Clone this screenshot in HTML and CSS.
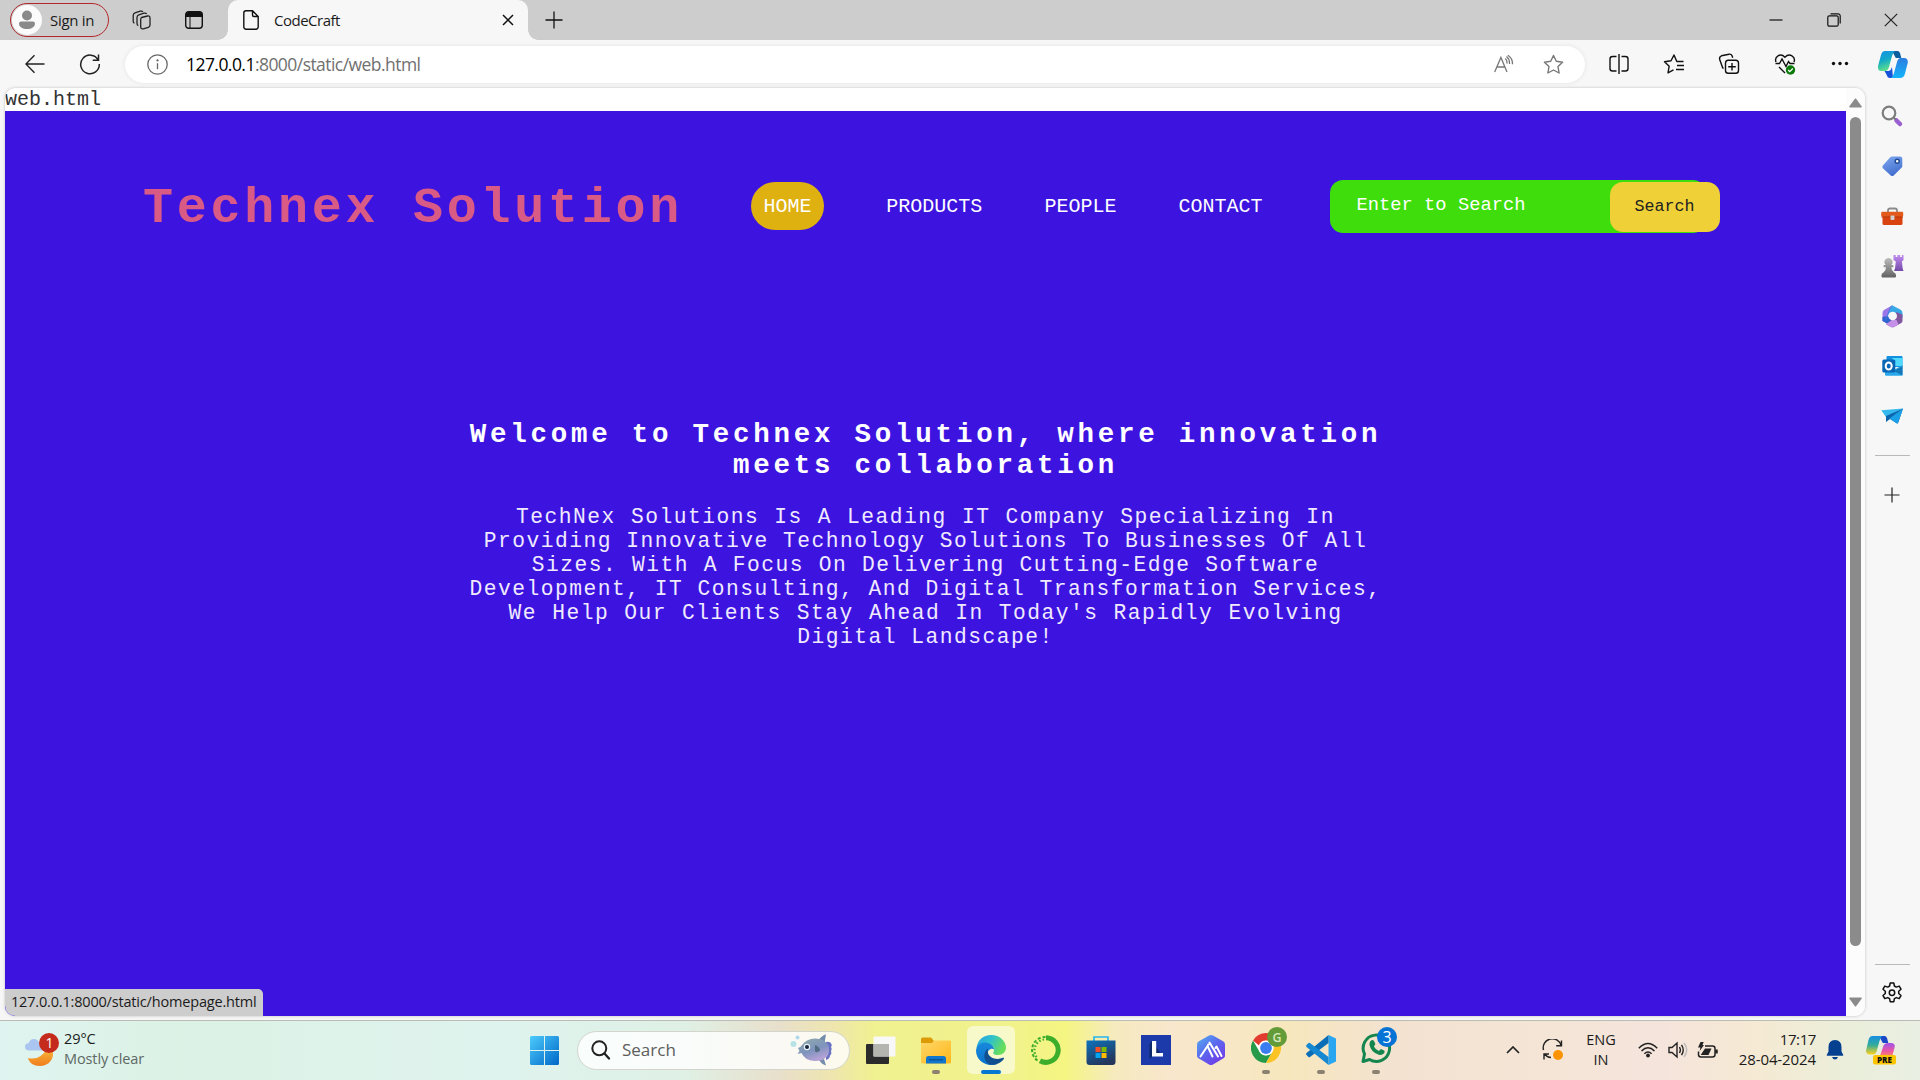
FILE: index.html
```html
<!DOCTYPE html>
<html lang="en">
<head>
<meta charset="utf-8">
<title>CodeCraft</title>
<link rel="stylesheet" href="styles.css">
</head>
<body>
<div class="screen">
  <header class="titlebar">
    <div class="profile">
      <svg class="avatar" width="30" height="30" viewBox="0 0 30 30"><circle cx="15" cy="15" r="15" fill="#fbfbfb"/><circle cx="15" cy="10.500" r="5" fill="#8a8a8a"/><path d="M9 16.500h12a2 2 0 0 1 2 2c0 3.600-3.500 5.500-8 5.500s-8-1.900-8-5.500a2 2 0 0 1 2-2z" fill="#8a8a8a"/></svg>
      <span class="ui signin">Sign in</span>
    </div>
    <svg class="ic workspaces" width="22" height="22" viewBox="0 0 22 22" fill="none" stroke="#222" stroke-width="1.300" stroke-linejoin="round"><path d="M11.500 8.500 17.500 7q2.500-.5 2.500 2v7q0 1.800-1.700 2.300l-5 1.500q-2.600.6-2.600-2v-7q0-1.800.8-2.300zM8.300 16.500q-1.300-.3-1.300-2V8.500q0-2 1.800-2.600L14 4.200q1.800-.5 2.700.8M4.500 14.200q-1.300-.3-1.300-2V6.500q0-2 1.800-2.600l5.200-1.700q1.800-.5 2.700.6"/></svg>
    <svg class="ic tabact" width="18" height="18" viewBox="0 0 18 18"><rect x=".7" y=".7" width="16.600" height="16.600" rx="3" fill="none" stroke="#111" stroke-width="1.400"/><path d="M1 6V3.500A2.500 2.500 0 0 1 3.500 1h11A2.500 2.500 0 0 1 17 3.500V6z" fill="#111"/><path d="M5 6v11" stroke="#111"/></svg>
    <div class="tab">
      <svg width="16" height="20" viewBox="0 0 16 20" fill="none" stroke="#111" stroke-width="1.400"><path d="M3 .8h6.500L15.200 6.500V17a2.200 2.200 0 0 1-2.200 2.200H3A2.200 2.200 0 0 1 .8 17V3A2.200 2.200 0 0 1 3 .8zM9.500.8V5A1.500 1.500 0 0 0 11 6.500h4.200"/></svg>
      <span class="ui tabname">CodeCraft</span>
      <svg class="tabclose" width="12" height="12" viewBox="0 0 12 12" stroke="#111" stroke-width="1.500"><path d="M1 1l10 10M11 1 1 11"/></svg>
    </div>
    <svg class="ic newtab" width="18" height="18" viewBox="0 0 18 18" stroke="#111" stroke-width="1.300"><path d="M9 .5v17M.5 9h17"/></svg>
    <div class="winbtns">
      <svg width="14" height="14" viewBox="0 0 14 14" stroke="#111" stroke-width="1.200"><path d="M.5 7h13"/></svg>
      <svg width="14" height="14" viewBox="0 0 14 14" fill="none" stroke="#111" stroke-width="1.200"><rect x=".8" y="2.800" width="10.400" height="10.400" rx="1.500"/><path d="M3.500.8H11A2.200 2.200 0 0 1 13.200 3v7.500"/></svg>
      <svg width="14" height="14" viewBox="0 0 14 14" stroke="#222" stroke-width="1.200"><path d="M.8.8l12.400 12.400M13.200.8.8 13.200"/></svg>
    </div>
  </header>

  <nav class="toolbar">
    <svg class="back" width="20" height="20" viewBox="0 0 20 20" fill="none" stroke="#222" stroke-width="1.400"><path d="M19.500 10H1M9.500 1.200.9 10l8.600 8.800"/></svg>
    <svg class="reload" width="22" height="22" viewBox="0 0 22 22" fill="none" stroke="#222" stroke-width="1.500"><path d="M19.200 7A9.300 9.300 0 1 0 20.300 11M19.500 1.500v5.700h-5.800"/></svg>
    <div class="address">
      <svg width="21" height="21" viewBox="0 0 21 21" fill="none" stroke="#666" stroke-width="1.300"><circle cx="10.500" cy="10.500" r="9.700"/><path d="M10.500 9.200v6"/><circle cx="10.500" cy="6.400" r=".5" fill="#666"/></svg>
      <span class="ui url"><b>127.0.0.1</b>:8000/static/web.html</span>
      <svg class="readaloud" width="20" height="18" viewBox="0 0 20 18" fill="none" stroke="#777" stroke-width="1.300"><path d="M.7 17 6.900 2.500 13 17M3 12h8M11.300 3.600q2 1.700 1.700 4.900M12.500 1.600q3.300 2.600 3 7.400M13.800.3q5 3.200 4.700 9"/></svg>
      <svg class="star" width="21" height="21" viewBox="0 0 21 21" fill="none" stroke="#777" stroke-width="1.400" stroke-linejoin="round"><path d="M10.500 1.500l2.800 5.800 6.300.9-4.600 4.400 1.100 6.400-5.600-3-5.600 3L6 12.600 1.400 8.200l6.300-.9z"/></svg>
    </div>
    <div class="tools">
      <svg width="22" height="22" viewBox="0 0 22 22" fill="none" stroke="#111" stroke-width="1.400"><path d="M8.500 3.500h-4a2.500 2.500 0 0 0-2.500 2.500v9.500A2.500 2.500 0 0 0 4.500 18h4M13.500 3.500h4A2.500 2.500 0 0 1 20 6v9.500a2.500 2.500 0 0 1-2.500 2.500h-4M11 1v20"/></svg>
      <svg width="22" height="22" viewBox="0 0 22 22" fill="none" stroke="#111" stroke-width="1.400" stroke-linejoin="round"><path d="M20.500 8.500h-6.700L11 2 8 7.800l-6.500.9 4.700 4.500L5 19.800l5.500-3M14 12.500h7M13 16.500h8"/></svg>
      <svg width="22" height="22" viewBox="0 0 22 22" fill="none" stroke="#111" stroke-width="1.400"><rect x="7.500" y="7.200" width="13" height="13" rx="2.800"/><path d="M14 10v7.500M10.200 13.700h7.600M5.500 15.500q-1-.5-1.300-2L1.700 6.500Q1 3.600 3.500 2.800L11 1.200q2.300-.3 3.200 1.800l.5 1.800"/></svg>
      <svg width="22" height="22" viewBox="0 0 22 22" fill="none" stroke="#111" stroke-width="1.400"><path d="M2 9C0 3.500 6.500-.5 10.900 4.200 15.500-.5 22 3.500 20 9M1.500 10.500H5.500l2.500-4.500 4 7.500 2.500-5 1.500 2h4.500M5 14l6 6"/><circle cx="16.500" cy="17" r="4.700" fill="#0b7a0b" stroke="none"/><path d="M14.200 17l1.600 1.700 3-3.200" stroke="#fff" stroke-width="1.200"/></svg>
      <svg width="22" height="22" viewBox="0 0 22 22" fill="#111"><circle cx="4.500" cy="10.500" r="1.700"/><circle cx="11" cy="10.500" r="1.700"/><circle cx="17.500" cy="10.500" r="1.700"/></svg>
    </div>
    <svg class="copilot" width="30" height="27" viewBox="0 0 30 27"><defs><linearGradient id="c1" x2=".3" y2="1"><stop stop-color="#1593e8"/><stop offset=".5" stop-color="#12a8c8"/><stop offset="1" stop-color="#5ce08c"/></linearGradient><linearGradient id="c2" x2="0" y2="1"><stop stop-color="#2b7de0"/><stop offset="1" stop-color="#14b4fa"/></linearGradient></defs><path d="M14 0h5.500q2.500.3 3 4l.8 3h-5.500z" fill="#0b5f9e"/><path d="M7 0h10q-2 1-3 5l-3 11q-1 4-4 4H3Q-1 19.500.3 14L3 4Q4 0 7 0z" fill="url(#c1)"/><path d="M6.500 20H11q2-.5 3-4l1 11h-3q-2.500 0-3.500-3.500z" fill="#1553d8"/><path d="M23 7h3q4.500.3 3.700 5L27 22.500Q26 27 22 27h-9q2-1 3-5l3-11q1-4 4-4z" fill="url(#c2)"/></svg>
  </nav>

  <main class="workspace">
    <section class="viewport">
      <div class="page">
        <p class="pagepath">web.html</p>
        <div class="site">
          <div class="sitenav">
            <h1>Technex Solution</h1>
            <ul class="menu"><li class="active">HOME</li><li>PRODUCTS</li><li>PEOPLE</li><li>CONTACT</li></ul>
            <div class="searchform"><div class="field">Enter to Search</div><button class="go">Search</button></div>
          </div>
          <article class="welcome">
            <h2>Welcome to Technex Solution, where innovation<br>meets collaboration</h2>
            <p><span class="loose">TechNex Solutions Is A Leading IT Company Specializing In</span><br>Providing Innovative Technology Solutions To Businesses Of All<br><span class="mid">Sizes. With A Focus On Delivering Cutting-Edge Software</span><br>Development, IT Consulting, And Digital Transformation Services,<br><span class="loose">We Help Our Clients Stay Ahead In Today's Rapidly Evolving</span><br>Digital Landscape!</p>
          </article>
        </div>
      </div>
      <div class="scrollbar">
        <svg width="13" height="10" viewBox="0 0 13 10"><path d="M6.500 1.200 12 8.800H1z" fill="#8b8b8b" stroke="#8b8b8b" stroke-width="1.500" stroke-linejoin="round"/></svg>
        <div class="thumb"></div>
        <svg class="down" width="13" height="10" viewBox="0 0 13 10"><path d="M6.500 8.800 12 1.200H1z" fill="#8b8b8b" stroke="#8b8b8b" stroke-width="1.500" stroke-linejoin="round"/></svg>
      </div>
      <div class="statusbubble"><span class="ui statustext">127.0.0.1:8000/static/homepage.html</span></div>
    </section>

    <aside class="sidebar">
      <svg width="24" height="24" viewBox="0 0 24 24" fill="none"><path d="M16.500 16.500l3.500 3.500" stroke="#9a5fd0" stroke-width="4.500" stroke-linecap="round"/><path d="M13 13l2.500 2.500" stroke="#777" stroke-width="2"/><circle cx="9" cy="9" r="6.300" stroke="#7d7d7d" stroke-width="2.200"/></svg>
      <svg width="24" height="24" viewBox="0 0 24 24"><defs><linearGradient id="tg" x2=".4" y2="1"><stop stop-color="#7fa9f0"/><stop offset="1" stop-color="#4470cf"/></linearGradient></defs><path d="M12 2.500h8a2.300 2.300 0 0 1 2.300 2.300V12q0 1-.8 1.800l-7.800 7.700q-1.500 1.200-3 0l-7.800-7.200q-1.200-1.300 0-2.800l7.300-8.200Q11 2.500 12 2.500z" fill="url(#tg)"/><circle cx="17.200" cy="7.300" r="2" fill="#fff" stroke="#204a94" stroke-width="1.500"/></svg>
      <svg class="toolbox" width="24" height="24" viewBox="0 0 24 24"><path d="M8 7V5.500q0-2 2-2h5q2 0 2 2V7" fill="none" stroke="#8a8a8a" stroke-width="1.800"/><rect x="2.500" y="11" width="20" height="9" rx="1.500" fill="#d8430f"/><rect x="1.200" y="6.800" width="22" height="5" rx="1.200" fill="#e25b1c"/><path d="M1.500 12h21.500" stroke="#b93808"/><rect x="10.500" y="10.500" width="4" height="4.500" rx="1" fill="#d0d0d0"/></svg>
      <svg width="24" height="24" viewBox="0 0 24 24"><defs><linearGradient id="pw" x2="0" y2="1"><stop stop-color="#bcbcbc"/><stop offset="1" stop-color="#626262"/></linearGradient><linearGradient id="rk" x2="0" y2="1"><stop stop-color="#c18cf0"/><stop offset="1" stop-color="#734aa8"/></linearGradient></defs><path d="M13.500 1h2.200v2h1.700V1h2.700v2h1.700V1h1.700v5l-1.600 1.600.8 7 .8 2.400h-9.500l1-2.400.8-7L13.500 6z" fill="url(#rk)"/><path d="M8.500 4a4 4 0 0 1 2.800 7h2v2.200h-2q.2 3.500 2.700 5.300 2 .8 2 2.500v1.500q0 1-1 1H2.500q-1 0-1-1V21q0-1.700 2-2.500 2.500-1.800 2.500-5.300H3.700V11h2A4 4 0 0 1 8.500 4z" fill="url(#pw)"/></svg>
      <svg width="24" height="24" viewBox="0 0 24 24"><path d="M12.500 1.200 4 5.900Q2.500 7 2.500 9v8l5 2.500 2-4-1.500-4z" fill="#9b76e8"/><path d="M2.500 13v4l5.300 3 4.500-3.800L8 12z" fill="#2f65cf"/><path d="M12 1.200l8.700 4.500q1.800 1.200 1.800 3.500v4.300L16 12l-4.500-3.500L9 9.500z" fill="#36a8e6"/><path d="M12 1.200 9 9.500 8 12 5 17l5-14z" fill="#4a82df"/><path d="M22.500 10.500V17q0 1.200-1.200 2l-7.300 4q-1.500.6-3 0l-5-2.800 6-4.700L16.500 12l-.5-4z" fill="#80569f"/><path d="M6 20.300 12 16h4.500l2 4.500-4.500 2.500q-1.500.6-3 0z" fill="#c491e8"/><circle cx="12.700" cy="12" r="4.300" fill="#f7f7f7"/></svg>
      <svg width="24" height="24" viewBox="0 0 24 24"><rect x="6.500" y="2" width="16" height="11" rx="1" fill="#1490df"/><path d="M12.500 4h10v8h-10z" fill="#50d9ff"/><path d="M5 11l9 5 8.500-5v9.500a1.200 1.200 0 0 1-1.200 1.200H6.200A1.200 1.200 0 0 1 5 20.500z" fill="#28a8ea"/><path d="M22.500 12 14 17l8.500 4.500z" fill="#1377b8"/><rect x="2.300" y="5.500" width="13" height="13" rx="1.500" fill="#0766b5"/><ellipse cx="8.700" cy="12" rx="3" ry="3.500" fill="none" stroke="#fff" stroke-width="2"/></svg>
      <svg width="24" height="24" viewBox="0 0 24 24"><path d="M1.300 6.300 23 4.500 6 13z" fill="#35b8ee"/><path d="M23 4.500 6 12v6l4-3 7 4.500q1 0 1.500-1.500z" fill="#0c66ad"/><path d="M23 4.500 9.500 14.500 17 19.500q.8.200 1.300-1.500z" fill="#19a0e6"/></svg>
      <hr>
      <svg class="add" width="18" height="18" viewBox="0 0 18 18" stroke="#222" stroke-width="1.200"><path d="M9 1.500v15M1.500 9h15"/></svg>
      <hr class="low">
      <svg class="gear" width="22" height="22" viewBox="0 0 22 22" fill="none" stroke="#111" stroke-width="1.500" stroke-linejoin="round"><path d="M9.200 1h3.600l.6 3 1.900 1.100 2.900-1 1.800 3.100-2.300 2v2.300l2.300 2-1.800 3.100-2.900-1-1.900 1.100-.6 3H9.200l-.6-3-1.900-1.100-2.900 1L2 13.500l2.300-2V9.200L2 7.200l1.800-3.100 2.900 1L8.600 4z"/><circle cx="11" cy="10.800" r="2.700"/></svg>
    </aside>
  </main>

  <footer class="taskbar">
    <div class="weather">
      <svg width="34" height="34" viewBox="0 0 34 34"><defs><linearGradient id="mn" x2="0" y2="1"><stop stop-color="#f8bc3c"/><stop offset="1" stop-color="#f07c1d"/></linearGradient></defs><path d="M3 25q12 3 19.500-10 6 1.500 5.500 7c-1 7-6.500 11-13 11-6 0-11-3-12-8z" fill="url(#mn)"/><path d="M3.500 17.500q-3.500-.5-3.500-3.700t3.500-3.500Q5 6 9 6q3.500 0 5 3.500l3 8z" fill="#a9c5f0"/><circle cx="24" cy="10" r="10" fill="#c42b1c"/><text x="24.500" y="15" font-size="14" fill="#fff" text-anchor="middle" class="svgtext">1</text></svg>
      <div class="wtext"><span class="ui temp">29°C</span><span class="ui cond">Mostly clear</span></div>
    </div>
    <svg class="start" width="29" height="29" viewBox="0 0 29 29"><defs><linearGradient id="wn" x2="1" y2="1"><stop stop-color="#4ccbfc"/><stop offset="1" stop-color="#0067c7"/></linearGradient></defs><path d="M1.500 0H14v14H0V1.500Q0 0 1.500 0zM15 0h12.500Q29 0 29 1.500V14H15zM0 15h14v14H1.500Q0 29 0 27.500zM15 15h14v12.500q0 1.500-1.500 1.500H15z" fill="url(#wn)"/></svg>
    <div class="tasksearch">
      <svg width="20" height="20" viewBox="0 0 20 20" fill="none" stroke="#222"><circle cx="8.300" cy="8.300" r="7" stroke-width="2"/><path d="M13.500 13.500l4.500 5" stroke-width="2.300" stroke-linecap="round"/></svg>
      <span class="ui tsearch">Search</span>
      <svg class="fish" width="44" height="32" viewBox="0 0 44 32"><defs><linearGradient id="fs" x2=".5" y2="1"><stop stop-color="#92ada8"/><stop offset=".6" stop-color="#7e93bd"/><stop offset="1" stop-color="#b5a2d6"/></linearGradient></defs><circle cx="3.500" cy="10" r="3" fill="#b8e3e6"/><circle cx="7.500" cy="3.500" r="2" fill="#b2d8ec"/><path d="M28 7q4-6 8-6.500L34.500 9zM29 26l5-1 2 6.500q-4-1-7-5.500z" fill="#738daa"/><path d="M36 8q4-1 5.500 2 .8 2-.5 3 1.500 2 0 4 1 3-1 4.500 0 3-4 4.500z" fill="#6972c3"/><path d="M8 14q2 0 4-3Q17 4 26 4.500q9 .5 12.500 7 1.500 7-1.500 11-5 5-13 4.500-9-.5-12.500-8l-4 1 2-3z" fill="url(#fs)"/><circle cx="17" cy="13" r="3.200" fill="#e7f5f8"/><circle cx="17" cy="13" r="2" fill="#16233f"/><path d="M25 11q5 2 5 5.500-3 3-5 1z" fill="#526d82"/></svg>
    </div>
    <div class="apps">
      <div class="app"><svg width="30" height="30" viewBox="0 0 30 30"><rect y="9" width="23" height="20" rx="1" fill="#2b2b2b"/><rect x="7.500" y="1.500" width="22" height="20" rx="1" fill="#f8f8f8"/><path d="M7.500 9H23v12.500H7.500z" fill="#b5b5b0"/></svg></div>
      <div class="app run"><svg width="30" height="30" viewBox="0 0 30 30"><defs><linearGradient id="fo" x2="1" y2="1"><stop stop-color="#ffd768"/><stop offset="1" stop-color="#ffb71b"/></linearGradient></defs><path d="M0 4q0-1.500 1.500-1.500H10L13 6v5H0z" fill="#dc9a06"/><path d="M0 8h11l2-2.500h16q1 0 1 1V27q0 1.500-1.500 1.500h-27Q0 28.500 0 27z" fill="url(#fo)"/><path d="M5 28.500v-5Q5 21 7.500 21h15q2.500 0 2.500 2.500v5z" fill="#1177cc"/><path d="M8 24.800h14" stroke="#0a4f93" stroke-width="1.300"/></svg></div>
      <div class="app run active"><svg width="30" height="30" viewBox="0 0 30 30"><defs><linearGradient id="e1" x2="1" y2=".4"><stop stop-color="#279fe4"/><stop offset=".5" stop-color="#2fc0cc"/><stop offset="1" stop-color="#67df5a"/></linearGradient><linearGradient id="e2" x2=".2" y2="1"><stop stop-color="#1b8adc"/><stop offset="1" stop-color="#0874cc"/></linearGradient></defs><path d="M.5 13C1.500 5 7.500 0 15 0c9 0 15 6.500 15 12.500 0 4.500-3.500 7.500-8 7.500-4 0-5.500-1.500-4.500-3 1.500-2.500.5-6-4-7.500Q6 7.500.5 13z" fill="url(#e1)"/><path d="M0 15.500C.5 9.500 6 7 10 7.500c5 .7 8 4 8 7-3-2-6.500 1-6.500 4.500 0 5 4 10 9.500 10C10 32.500 0 25.500 0 15.500z" fill="url(#e2)"/><path d="M12 13.500c-5 4-5.500 12 1.500 16 7 1.500 12.500-2.500 14.500-6 .3-.8-.3-1-1-.7-7 3-14-.5-15-4.800-.3-1.800-.2-3 0-4.500z" fill="#124f91"/></svg></div>
      <div class="app"><svg width="30" height="30" viewBox="0 0 30 30" fill="none" stroke="#3cae2b"><path d="M15 2.700A12.300 12.300 0 1 1 9 25.800" stroke-width="5"/><path d="M14.500 2A13 13 0 0 0 8 26.500" stroke-width="2" stroke-dasharray="3 2"/><path d="M13 4.500A11 11 0 0 0 7 23.500" stroke-width="2.200" stroke-dasharray="1.500 2"/></svg></div>
      <div class="app"><svg width="30" height="30" viewBox="0 0 30 30"><defs><linearGradient id="st" x2=".5" y2="1"><stop stop-color="#0d72bd"/><stop offset="1" stop-color="#24365c"/></linearGradient></defs><path d="M8 6V2h14v4" fill="none" stroke="#29b5ee" stroke-width="1.700"/><path d="M.5 5.500h29V27q0 3-3 3h-23q-3 0-3-3z" fill="url(#st)"/><path d="M9.500 12h5v5h-5z" fill="#f25022"/><path d="M15.500 12h5v5h-5z" fill="#7fba00"/><path d="M9.500 18h5v5h-5z" fill="#00a4ef"/><path d="M15.500 18h5v5h-5z" fill="#ffb900"/></svg></div>
      <div class="app"><svg width="30" height="30" viewBox="0 0 30 30"><path d="M0 0h30v30H0z" fill="#1c3aa9"/><path d="M11 6l-2.500 3v15l3-3h10z" fill="#0c2a6a"/><path d="M11 6h4.200v12H22v3.500H11z" fill="#fff"/></svg></div>
      <div class="app"><svg width="30" height="30" viewBox="0 0 30 30"><defs><linearGradient id="hx" x2=".8" y2="1"><stop stop-color="#55b2f4"/><stop offset=".5" stop-color="#5a67ec"/><stop offset="1" stop-color="#7238e8"/></linearGradient></defs><path d="M15 0q1 0 2 .6l10.500 6Q29 7.500 29 9.500v11q0 2-1.500 2.800L17 29.400q-2 1.200-4 0L2.500 23.300Q1 22.500 1 20.500v-11q0-2 1.500-2.900l10.500-6Q14 0 15 0z" fill="url(#hx)"/><path d="M4.500 21.500 11.500 11l5 10.500M11.500 11l.8-1.500M13.500 7.500 22 21.500M19.500 13l1-1.500 5 9.500" fill="none" stroke="#fff" stroke-width="2" stroke-linecap="round" stroke-linejoin="round"/></svg></div>
      <div class="app run"><svg width="38" height="38" viewBox="0 0 38 38" class="badged"><circle cx="15" cy="21" r="15" fill="#fff"/><path d="M2 13.500a15 15 0 0 1 26 0H15a7.500 7.500 0 0 0-7 5z" fill="#e33b2e"/><path d="M2 13.500A15 15 0 0 0 15 36l6.500-11.250a7.500 7.500 0 0 1-13 0z" fill="#259b49"/><path d="M28 13.500A15 15 0 0 1 15 36l6.500-11.250A7.500 7.500 0 0 0 15 13.500z" fill="#fbc424"/><circle cx="15" cy="21" r="7.300" fill="#fff"/><circle cx="15" cy="21" r="5.900" fill="#397df0"/><circle cx="26" cy="10" r="10" fill="#639b38"/><text x="26" y="14.500" font-size="12.500" fill="#d7e8bd" text-anchor="middle" class="svgtext bold">G</text></svg></div>
      <div class="app run"><svg width="30" height="30" viewBox="0 0 30 30"><path d="M22.500 0 30 3.500v23L22.500 30z" fill="#2aa5ef"/><path d="M22.500 0v8L4 22q-1 .5-1.500 0L.5 20q-.8-1 0-2z" fill="#0a6db8"/><path d="M22.500 30v-8L4 8q-1-.5-1.500 0L.5 10q-.8 1 0 2z" fill="#1688d2"/></svg></div>
      <div class="app run"><svg width="38" height="38" viewBox="0 0 38 38" class="badged"><path d="M2 34.500l1.500-7.500A13.200 13.200 0 1 1 8.500 32.500z" fill="none" stroke="#13864f" stroke-width="3" stroke-linejoin="round"/><path d="M9.500 14q2-2 3.500 0l1.400 3-1.500 2.500q1.700 3.300 5 4.500l2-2 3.200 1.500q1 .8.200 2.500-2 2.500-5 2Q10 25.500 8.500 18q-.2-2.500 1-4z" fill="#13864f"/><circle cx="26" cy="10" r="10" fill="#0573d5"/><text x="26" y="15.500" font-size="16" fill="#fff" text-anchor="middle" class="svgtext">3</text></svg></div>
    </div>
    <div class="tray">
      <svg class="chev" width="14" height="8" viewBox="0 0 14 8" fill="none" stroke="#222" stroke-width="1.700"><path d="M1 7l6-6 6 6"/></svg>
      <svg class="sync" width="22" height="22" viewBox="0 0 22 22" fill="none" stroke="#222" stroke-width="1.400"><path d="M1.500 11A9 9 0 0 1 19 6.500M19.500 1.500v5.300h-5.300M9 18.500a9 9 0 0 1-6.500-3.500M2 20.500V15h5"/><circle cx="16" cy="16" r="5" fill="#fb9400" stroke="none"/></svg>
      <div class="lang"><span class="ui eng">ENG</span><span class="ui in">IN</span></div>
      <svg class="wifi" width="20" height="16" viewBox="0 0 20 16" fill="none" stroke="#222" stroke-width="1.500"><path d="M.8 6.300q9.200-9.500 18.400 0M3.500 9q6.500-6.500 13 0M6.400 11.700q3.600-3.500 7.200 0"/><circle cx="10" cy="13.500" r="1.900" fill="#222" stroke="none"/></svg>
      <svg class="vol" width="20" height="18" viewBox="0 0 20 18" fill="none" stroke="#222" stroke-width="1.400"><path d="M1 6.500h3L9 2v14l-5-4.500H1zM11.500 6q1.800 3 0 6M13.500 3.800q3.500 5.200 0 10.400"/><path d="M16 2q5.500 7 0 14" stroke="#bbb"/></svg>
      <svg class="bat" width="21" height="17" viewBox="0 0 21 17" fill="none" stroke="#222" stroke-width="1.500"><path d="M8 4h7.500A2.500 2.500 0 0 1 18 6.500v6a2.500 2.500 0 0 1-2.500 2.500H4a2.500 2.500 0 0 1-2.500-2.500V9.500"/><path d="M19.500 7.500v4" stroke-width="2.500"/><path d="M4 12.500 8 6.500h6.500L11.500 13H4zM3.500 0h3.200L5.500 3H7L2.700 9 3.400 5.500H1z" fill="#222" stroke="none"/></svg>
      <div class="clock"><span class="ui time">17:17</span><span class="ui date">28-04-2024</span></div>
      <svg class="bell" width="18" height="20" viewBox="0 0 18 20" fill="#04408f"><path d="M9 0q6.500.3 6.500 7v4.500L17.300 15q.2.800-.6.800H1.300q-.8 0-.6-.8l1.800-3.500V7Q2.500.3 9 0zM6 17h6q-1 2.500-3 2.500T6 17z"/></svg>
      <svg class="pre" width="30" height="29" viewBox="0 0 30 29"><defs><linearGradient id="p1" x2="0" y2="1"><stop stop-color="#168ee0"/><stop offset=".5" stop-color="#35ad9a"/><stop offset="1" stop-color="#ffd21c"/></linearGradient><linearGradient id="p2" x2="0" y2="1"><stop stop-color="#a052ea"/><stop offset=".6" stop-color="#ef59a0"/><stop offset="1" stop-color="#ff9058"/></linearGradient></defs><path d="M13 0h5.500q2.500.3 3 4l.8 3h-5.500z" fill="#1a48c8"/><path d="M6.500 0h10q-2 1-3 5l-2.500 9q-1 4.500-4 4.500H3q-4-.5-2.700-5L2.500 4q1-4 4-4z" fill="url(#p1)"/><path d="M22 7h3q4.500.3 3.700 4L26 21H11q3 0 4-4l2-6q1-4 5-4z" fill="url(#p2)"/><rect x="7" y="19" width="23" height="9.500" rx="2" fill="#fdc500"/><text x="18.500" y="26.500" font-size="8" fill="#111" text-anchor="middle" class="svgtext heavy">PRE</text></svg>
    </div>
  </footer>
</div>
</body>
</html>
```
FILE: styles.css
```css
* { box-sizing: border-box; }
body { margin: 0; }
svg { display: block; flex: none; }
.screen { width: 1920px; height: 1080px; overflow: hidden; display: grid; grid-template-rows: 40px 48px 932px 60px; background: #f7f7f7; }
.ui { font-family: "Open Sans", "Noto Sans", sans-serif; font-size: 15px; line-height: 20px; white-space: nowrap; color: #1b1b1b; }
.svgtext { font-family: "Open Sans", sans-serif; }
.bold { font-weight: 600; }
.heavy { font-weight: 800; }

/* tab strip */
.titlebar { display: flex; align-items: center; background: #cdcdcd; }
.profile { margin-left: 10px; width: 99px; height: 34px; border: 1.500px solid #b3282d; border-radius: 17px; display: flex; align-items: center; padding-left: 1px; }
.signin { margin-left: 8px; font-size: 15px; letter-spacing: -.3px; }
.workspaces { margin-left: 21px; }
.tabact { margin-left: 33px; }
.tab { margin-left: 25px; width: 300px; height: 40px; background: #f7f7f7; border-radius: 10px 10px 0 0; display: flex; align-items: center; padding-left: 15px; position: relative; }
.tab::before, .tab::after { content: ""; position: absolute; bottom: 0; width: 10px; height: 10px; }
.tab::before { left: -10px; background: radial-gradient(circle at 0 0, #cdcdcd 9.500px, #f7f7f7 10px); }
.tab::after { right: -10px; background: radial-gradient(circle at 100% 0, #cdcdcd 9.500px, #f7f7f7 10px); }
.tabname { margin-left: 15px; font-size: 15px; letter-spacing: -.5px; }
.tabclose { margin-left: auto; margin-right: 14px; }
.newtab { margin-left: 17px; }
.winbtns { margin-left: auto; margin-right: 22px; display: flex; gap: 43.500px; }

/* toolbar */
.toolbar { display: flex; align-items: center; }
.back { margin-left: 25px; }
.reload { margin-left: 34px; }
.address { margin-left: 24px; width: 1460px; height: 37px; border-radius: 19px; background: #fff; box-shadow: 0 0 4px #e2e2e2; display: flex; align-items: center; padding: 0 21px 0 22px; }
.url { margin-left: 18px; font-size: 17.500px; line-height: 22px; padding-bottom: 1px; color: #707070; letter-spacing: -.55px; }
.url b { font-weight: 400; color: #000; }
.readaloud { margin-left: auto; margin-right: 29px; }
.tools { margin-left: 23px; display: flex; gap: 33.200px; }
.copilot { margin-left: 27px; }

/* browser body */
.workspace { display: flex; height: 932px; }
.viewport { margin-left: 5px; width: 1860px; height: 928px; background: #fff; border-radius: 10px; box-shadow: 0 0 3px #bbb; display: flex; overflow: hidden; position: relative; }
.page { width: 1841px; font-family: "Courier New", "Liberation Mono", monospace; }
.pagepath { margin: 0; height: 23px; font-size: 20px; line-height: 24px; color: #333; }
.site { height: 905px; background: #3c13df; color: #fff; }
.sitenav { display: flex; align-items: center; padding: 69px 0 0 138px; height: 121px; }
.sitenav h1 { margin: 0; padding-top: 5px; width: 608px; font-size: 50px; line-height: 52px; letter-spacing: 3.750px; color: #da5a86; white-space: nowrap; }
.menu { margin: 0; padding: 0; list-style: none; display: flex; align-items: center; gap: 62.200px; font-size: 20px; line-height: 23px; }
.menu .active { width: 73px; height: 48px; line-height: 49px; text-align: center; border-radius: 25px; background: #dfb110; }
.searchform { margin: 1px 0 0 67px; display: flex; align-items: center; }
.field { width: 376px; height: 53px; border-radius: 13px; background: #3fdd0b; padding-left: 27px; font-size: 18.750px; line-height: 51px; white-space: nowrap; }
.go { margin-left: -96px; width: 110px; height: 50px; border: 0; border-radius: 13px; padding: 0; background: #efd137; color: #222; font-family: "Courier New", "Liberation Mono", monospace; font-size: 16.667px; }
.welcome { padding-top: 187px; text-align: center; white-space: nowrap; }
.welcome h2 { margin: 0; font-size: 27.500px; line-height: 31px; letter-spacing: 3.750px; }
.welcome p { margin: 24px 0 0; font-size: 21.250px; line-height: 24px; letter-spacing: 1.500px; color: #f0eaff; }
.loose { word-spacing: .8px; }
.mid { word-spacing: .5px; }
.scrollbar { width: 19px; background: #fcfcfc; display: flex; flex-direction: column; align-items: center; padding: 10px 0 9px; }
.thumb { margin-top: 9px; width: 11px; height: 829px; border-radius: 6px; background: #8b8b8b; }
.down { margin-top: auto; }
.statusbubble { position: absolute; left: 0; bottom: 0; width: 258px; height: 27px; border-radius: 0 5px 0 10px; background: #cdcdcd; padding: 3px 0 0 6px; }
.statustext { display: block; font-size: 14.500px; letter-spacing: -.18px; }
.sidebar { flex: 1; height: 932px; display: flex; flex-direction: column; align-items: center; gap: 26px; padding: 16px 1px 0 0; }
.sidebar .toolbox { margin: 1px 0 -1px; }
.sidebar hr { width: 35px; height: 1px; border: 0; margin: 1px 0 0; background: #b9b9b9; }
.sidebar .add { margin: 4px 1px 0 0; }
.sidebar hr.low { margin: auto 0 0; }
.sidebar .gear { margin: -9px 0 16px; }

/* taskbar */
.taskbar { border-top: 1px solid #b9bdb5; display: grid; grid-template-columns: 530px 29px 294.500px 550px 1fr; align-items: center; background: linear-gradient(90deg, #dff4f0 0, #dcf2e5 180px, #dff3ee 500px, #dff1e6 680px, #e8dfcb 780px, #eee5b0 830px, #f0f190 875px, #f0f28c 1000px, #f5f582 1065px, #f6eabf 1115px, #f8e7cc 1170px, #f7e7bd 1290px, #f3e2d0 1390px, #f5e5d7 1560px, #f5e4dc 1660px, #f5ead3 1760px, #eaeeda 1850px, #e9efe3 1920px); }
.weather { display: flex; align-items: center; padding-left: 25px; margin-top: -1px; }
.wtext { margin-left: 5px; display: flex; flex-direction: column; margin-top: -2px; }
.temp, .cond { font-size: 14.500px; letter-spacing: -.1px; }
.cond { color: #5d6865; }
.tasksearch { margin-left: 18px; width: 273px; height: 39px; border: 1px solid #d3d5cc; border-radius: 20px; background: rgba(255,255,255,.8); display: flex; align-items: center; padding: 0 15px 0 13px; }
.tsearch { margin-left: 11px; font-size: 17px; line-height: 18px; padding-bottom: 1px; color: #5d5d5d; }
.fish { margin-left: auto; }
.start, .tasksearch, .apps { margin-top: -1px; }
.apps { display: flex; }
.app { flex: none; width: 55px; height: 48px; display: flex; align-items: center; justify-content: center; position: relative; }
.badged { margin: -8px 0 0 8px; }
.app.run::after { content: ""; position: absolute; left: 23.500px; bottom: 0; width: 8px; height: 4px; border-radius: 2px; background: #8b8171; }
.app.active::before { content: ""; position: absolute; left: 3px; top: 0; width: 48px; height: 48px; border-radius: 6px; background: rgba(255,255,255,.55); }
.app svg { position: relative; }
.app.active::after { left: 17px; width: 20px; background: #0678d4; }
.tray { display: flex; align-items: center; margin: -1px 0 0 -4.500px; }
.chev { margin-left: 107px; }
.sync { margin-left: 22px; }
.lang { margin: -1px 0 0 16px; width: 42px; display: flex; flex-direction: column; align-items: center; }
.eng, .in { font-size: 14.500px; }
.wifi { margin-left: 16px; }
.vol { margin-left: 10px; }
.bat { margin-left: 9px; }
.clock { width: 98px; margin-top: -2px; display: flex; flex-direction: column; align-items: flex-end; }
.time, .date { font-size: 15px; }
.date { letter-spacing: -.1px; }
.time { letter-spacing: -.4px; }
.bell { margin-left: 10px; }
.pre { margin-left: 22px; }
```
